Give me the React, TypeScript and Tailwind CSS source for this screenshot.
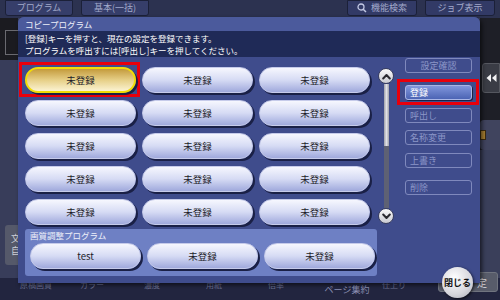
import React from 'react';

const rows = [0, 1, 2, 3, 4];
const cols = [0, 1, 2];

function PillButton({ label, selected }: { label: string; selected?: boolean }) {
  return (
    <div className="relative">
      {selected && (
        <div className="absolute -left-[6px] -top-[5px] -right-[4px] -bottom-[4px] border-[3px] border-[#e8000c]" />
      )}
      <div
        className={`relative h-[26px] rounded-full flex items-center justify-center text-[9.5px] text-[#1c1c28] shadow-[2px_2px_0_#1a2046] ${
          selected
            ? 'bg-gradient-to-b from-[#c49b3a] via-[#e6cf86] to-[#fbf3d2] border-[2px] border-[#f2dc06]'
            : 'bg-gradient-to-b from-[#f6f7fe] via-[#d6dbf4] to-[#a0a9dc] border border-[#c6cbea]'
        }`}
      >
        {label}
      </div>
    </div>
  );
}

function SideButton({ label, active, center }: { label: string; active?: boolean; center?: boolean }) {
  return (
    <div className="relative">
      {active && (
        <div className="absolute -left-[8px] -top-[6px] -right-[7px] -bottom-[5px] border-[3px] border-[#e8000c]" />
      )}
      <div
        className={`relative h-[15px] rounded-[3px] flex items-center text-[9px] leading-none ${center ? 'justify-center' : 'pl-[4px]'} ${
          active
            ? 'bg-gradient-to-b from-[#8196dc] to-[#4c64b4] border border-[#a9b6e6] text-white shadow-[1px_1px_0_#1b2146]'
            : 'border border-[#7f89bd] text-[#8c96c8]'
        }`}
      >
        {label}
      </div>
    </div>
  );
}

function Chevron({ up }: { up?: boolean }) {
  return (
    <div className="w-[16px] h-[16px] rounded-full bg-gradient-to-b from-[#fafafa] to-[#c9cad2] border border-[#3a3f60] flex items-center justify-center">
      <svg width="9" height="7" viewBox="0 0 9 7">
        <path
          d={up ? 'M1.2 5.5 L4.5 2 L7.8 5.5' : 'M1.2 1.5 L4.5 5 L7.8 1.5'}
          fill="none"
          stroke="#2a2a30"
          strokeWidth="2"
          strokeLinecap="round"
          strokeLinejoin="round"
        />
      </svg>
    </div>
  );
}

export default function App() {
  return (
    <div className="relative w-[500px] h-[300px] overflow-hidden bg-[#383e5c] font-['Noto_Sans_CJK_JP',sans-serif] flex flex-col">
      {/* top tabs */}
      <div className="h-[18px] bg-[#2c3250] flex items-start px-[5px] gap-[8px]">
        <div className="w-[68px] h-[16px] rounded-b-[3px] bg-[#363e6a] border border-[#1b2038] text-[9px] text-[#a3aacb] flex items-center justify-center">
          プログラム
        </div>
        <div className="w-[68px] h-[16px] rounded-b-[3px] bg-[#363e6a] border border-[#1b2038] text-[9px] text-[#a3aacb] flex items-center justify-center">
          基本(一括)
        </div>
        <div className="flex-1" />
        <div className="w-[70px] h-[16px] rounded-b-[3px] bg-[#323a66] border border-[#1b2038] text-[9px] text-[#a3aacb] flex items-center justify-center gap-[4px]">
          <svg width="10" height="10" viewBox="0 0 10 10">
            <circle cx="4" cy="4" r="3" fill="none" stroke="#c2c8e4" strokeWidth="1.3" />
            <path d="M6.2 6.2 L9 9" stroke="#c2c8e4" strokeWidth="1.5" />
          </svg>
          機能検索
        </div>
        <div className="w-[70px] h-[16px] rounded-b-[3px] bg-[#323a66] border border-[#1b2038] text-[9px] text-[#a3aacb] flex items-center justify-center">
          ジョブ表示
        </div>
      </div>

      {/* middle background */}
      <div className="flex-1 flex">
        <div className="w-[18px] flex flex-col">
          <div className="h-[42px] bg-[#1b1b20] pt-[12px] pl-[5px]">
            <div className="w-[14px] h-[25px] border border-[#6a6a70]" />
          </div>
          <div className="flex-1 bg-[#383d5a] pt-[165px] pl-[5px]">
            <div className="w-[16px] h-[40px] rounded-[3px] bg-[#55596a] text-[9px] text-[#d0d0d8] leading-[12px] pl-[6px] pt-[8px]">
              文<br />自
            </div>
          </div>
        </div>
        <div className="flex-1" />
        <div className="w-[20px] flex flex-col bg-[#1e1f27]">
          <div className="h-[45px]" />
          <div className="ml-[2px] h-[30px] rounded-l-[3px] bg-[#3a3c45] border border-[#55575f] flex items-center justify-center">
            <svg width="11" height="8" viewBox="0 0 11 8">
              <path d="M5 0 L0.5 4 L5 8 Z M10.5 0 L6 4 L10.5 8 Z" fill="#f2f2f4" />
            </svg>
          </div>
          <div className="h-[27px]" />
          <div className="h-[30px] bg-[#40445e] rounded-l-[4px] flex items-center">
            <div className="w-[6px] h-[10px] bg-[#a47c30] border border-[#3a2a10]" />
          </div>
          <div className="flex-1 bg-[#3a3f5a]" />
        </div>
      </div>

      {/* bottom labels */}
      <div className="h-[22px] bg-[#22253f] flex text-[8px] text-[#6e7396] leading-[9px]">
        <div className="w-[80px] pl-[20px] pt-[2px]">原稿画質</div>
        <div className="w-[64px] pt-[2px]">カラー</div>
        <div className="w-[62px] pt-[2px]">濃度</div>
        <div className="w-[62px] pt-[2px]">用紙</div>
        <div className="w-[44px] pt-[2px]">倍率</div>
        <div className="w-[70px] mt-[-7px] flex flex-col items-center gap-[1px]">
          <div className="leading-[12px]">両面/</div>
          <div className="text-[9px] leading-[12px] text-[#8a8fb2]">ページ集約</div>
        </div>
        <div className="w-[60px] pt-[2px]">仕上り</div>
        <div className="mt-[-6px] ml-[-4px] w-[60px] h-[20px] rounded-[3px] bg-[#585c6a] border border-[#70747f] text-[10px] text-[#e0e0e6] flex items-center justify-end pr-[10px]">
          定
        </div>
      </div>

      {/* dialog */}
      <div className="absolute left-[18px] top-[17px] w-[462px] h-[266px] rounded-t-[6px] bg-[#3f4c8c] shadow-[2px_2px_4px_rgba(0,0,0,0.6)] flex flex-col overflow-hidden">
        <div className="h-[14px] bg-[#4b5a9c] pl-[7px] text-[8.5px] leading-[14px] text-[#eef0fa]">コピープログラム</div>
        <div className="h-[26px] bg-[#1f2a57] pl-[7px] pt-[1px] text-[8.5px] leading-[12px] text-white">
          <div>[登録]キーを押すと、現在の設定を登録できます。</div>
          <div>プログラムを呼出すには[呼出し]キーを押してください。</div>
        </div>
        <div className="flex-1 flex pl-[7px]">
          <div className="w-[352px] flex flex-col pt-[10px]">
            <div className="grid grid-cols-[111px_111px_111px] gap-x-[6px] gap-y-[7px]">
              {rows.map((r) =>
                cols.map((c) => <PillButton key={`${r}-${c}`} label="未登録" selected={r === 0 && c === 0} />)
              )}
            </div>
            <div className="mt-[4px] h-[47px] rounded-[3px] bg-[#6e80c4] px-[5px] flex flex-col">
              <div className="h-[13px] text-[8.5px] leading-[12px] text-[#eef0fa]">画質調整プログラム</div>
              <div className="mt-[1px] grid grid-cols-[111px_111px_111px] gap-x-[6px]">
                <PillButton label="test" />
                <PillButton label="未登録" />
                <PillButton label="未登録" />
              </div>
            </div>
          </div>
          <div className="ml-[1px] w-[16px] pt-[11px] flex flex-col items-center self-start">
            <Chevron up />
            <div className="w-[5px] h-[62px] bg-gradient-to-r from-[#9ea0aa] via-[#e0e0e6] to-[#9ea0aa]" />
            <div className="w-[5px] h-[62px] bg-[#5e6174]" />
            <Chevron />
          </div>
          <div className="ml-[11px] w-[67px] pt-[1px] flex flex-col">
            <SideButton label="設定確認" center />
            <div className="h-[12px]" />
            <SideButton label="登録" active />
            <div className="h-[8px]" />
            <SideButton label="呼出し" />
            <div className="h-[7px]" />
            <SideButton label="名称変更" />
            <div className="h-[8px]" />
            <SideButton label="上書き" />
            <div className="h-[12px]" />
            <SideButton label="削除" />
          </div>
        </div>
      </div>

      {/* close button */}
      <div className="absolute left-[442px] top-[267px] w-[31px] h-[31px] rounded-full bg-[radial-gradient(circle_at_40%_35%,#ffffff,#d6d6dc_60%,#a9aab4)] shadow-[1px_1px_3px_rgba(0,0,0,0.7)] flex items-center justify-center text-[9px] font-bold text-[#111]">
        閉じる
      </div>
    </div>
  );
}
